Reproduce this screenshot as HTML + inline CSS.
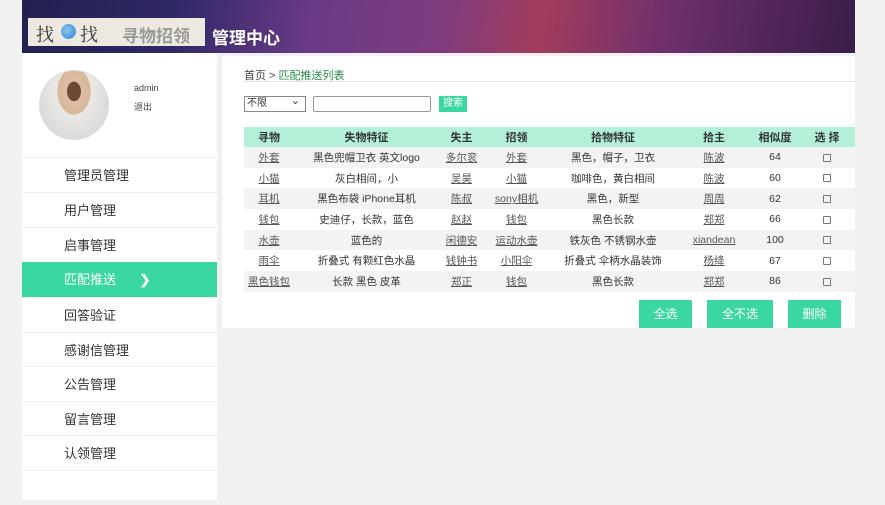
<!DOCTYPE html>
<html><head><meta charset="utf-8"><style>
*{margin:0;padding:0;box-sizing:border-box}
body{width:885px;height:500px;background:#f1f1f1;font-family:"Liberation Sans","Noto Sans CJK SC",sans-serif;position:relative;overflow:hidden;font-size:11px;color:#333}
.hd{position:absolute;left:22px;top:0;width:833px;height:53px;background:linear-gradient(100deg,#22214f 0%,#2f2866 18%,#6a3a86 35%,#7e3c7e 50%,#a33c5c 62%,#6b2f6c 78%,#3a1d48 100%)}
.logo{position:absolute;left:6px;top:18px;width:177px;height:28px;background:#eee9e0;overflow:hidden}
.logo .a1,.logo .a2{position:absolute;top:3px;font-size:18px;color:#333;font-family:"Noto Serif CJK SC",serif}
.logo .a1{left:8px}.logo .a2{left:52px}
.logo .dot{position:absolute;left:33px;top:6px;width:15px;height:15px;border-radius:50%;background:radial-gradient(circle at 40% 40%,#8cc8f0,#2a7fd0);}
.logo .b{position:absolute;left:94px;top:4px;font-size:17px;color:#999;font-weight:bold}
.hd .t{position:absolute;left:190px;top:24px;color:#fff;font-size:17px;font-weight:bold}
.sb{position:absolute;left:22px;top:53px;width:195px;height:447px;background:#fff}
.av{position:absolute;left:17px;top:17px;width:70px;height:70px;border-radius:50%;background:radial-gradient(ellipse at 50% 30%,#6a4a34 0,#6a4a34 14%,#dcbca4 15%,#d8b89a 34%,#eae8e6 35%,#dedcda 70%);border:1px solid #ddd}
.sb .u{position:absolute;left:112px;top:30px;font-size:9px;color:#444}
.sb .o{position:absolute;left:112px;top:47px;font-size:9px;color:#444}
.mi{position:absolute;left:0;width:195px;height:35px;border-top:1px solid #eee;padding-left:42px;line-height:35px;font-size:13px;color:#333}
.mi.on{background:#3ad8a0;color:#fff;border:none}
.mn{position:absolute;left:222px;top:56px;width:633px;height:272px;background:#fff}
.bc{position:absolute;left:22px;top:11px;font-size:11px;color:#444}
.bc span{color:#2a8a4a}
.ln{position:absolute;left:22px;top:25px;width:611px;height:1px;background:#e4e4e4}
.sel{position:absolute;left:22px;top:40px;width:62px;height:16px;border:1px solid #888;font-size:10px;padding-left:2px;line-height:14px}
.sel:after{content:"⌄";position:absolute;right:5px;top:-3px;font-size:11px}
.inp{position:absolute;left:91px;top:40px;width:118px;height:16px;border:1px solid #999;border-radius:2px}
.sbt{position:absolute;left:217px;top:40px;width:28px;height:16px;background:#3ad8a0;color:#fff;font-size:10px;text-align:center;line-height:16px}
table{position:absolute;left:22px;top:71px;width:611px;border-collapse:collapse}
th{background:#b2f0d8;height:20px;font-size:11px;font-weight:bold;color:#333}
td{height:20.7px;text-align:center;font-size:10.5px;color:#333}
td u{color:#555}
tr.g td{background:#f3f3f3}
.cb{display:inline-block;width:8px;height:8px;border:1px solid #777;border-radius:1px;vertical-align:middle}
.btn{position:absolute;top:244px;height:28px;background:#3ad8a0;color:#fff;font-size:12px;text-align:center;line-height:28px}
</style></head><body>
<div class="hd"><div class="logo"><span class="a1">找</span><div class="dot"></div><span class="a2">找</span><span class="b">寻物招领</span></div><div class="t">管理中心</div></div>
<div class="sb">
<div class="av"></div><div class="u">admin</div><div class="o">退出</div>
<div class="mi" style="top:104px">管理员管理</div>
<div class="mi" style="top:139px">用户管理</div>
<div class="mi" style="top:174px">启事管理</div>
<div class="mi on" style="top:209px">匹配推送 <span style="margin-left:20px;font-weight:bold">❯</span></div>
<div class="mi" style="top:244px">回答验证</div>
<div class="mi" style="top:279px">感谢信管理</div>
<div class="mi" style="top:313px">公告管理</div>
<div class="mi" style="top:348px">留言管理</div>
<div class="mi" style="top:382px">认领管理</div>
<div class="mi" style="top:417px"></div>
</div>
<div class="mn">
<div class="bc">首页 &gt; <span>匹配推送列表</span></div><div class="ln"></div>
<div class="sel">不限</div><div class="inp"></div><div class="sbt">搜索</div>
<table>
<tr><th style="width:50px">寻物</th><th style="width:145px">失物特征</th><th style="width:45px">失主</th><th style="width:65px">招领</th><th style="width:128px">拾物特征</th><th style="width:74px">拾主</th><th style="width:48px">相似度</th><th>选 择</th></tr>
<tr class="g"><td><u>外套</u></td><td>黑色兜帽卫衣 英文logo</td><td><u>多尔衮</u></td><td><u>外套</u></td><td>黑色，帽子，卫衣</td><td><u>陈波</u></td><td>64</td><td><span class="cb"></span></td></tr>
<tr><td><u>小猫</u></td><td>灰白相间，小</td><td><u>吴昊</u></td><td><u>小猫</u></td><td>咖啡色，黄白相间</td><td><u>陈波</u></td><td>60</td><td><span class="cb"></span></td></tr>
<tr class="g"><td><u>耳机</u></td><td>黑色布袋 iPhone耳机</td><td><u>陈叔</u></td><td><u>sony相机</u></td><td>黑色，新型</td><td><u>周周</u></td><td>62</td><td><span class="cb"></span></td></tr>
<tr><td><u>钱包</u></td><td>史迪仔，长款，蓝色</td><td><u>赵赵</u></td><td><u>钱包</u></td><td>黑色长款</td><td><u>郑郑</u></td><td>66</td><td><span class="cb"></span></td></tr>
<tr class="g"><td><u>水壶</u></td><td>蓝色的</td><td><u>闲德安</u></td><td><u>运动水壶</u></td><td>铁灰色 不锈钢水壶</td><td><u>xiandean</u></td><td>100</td><td><span class="cb"></span></td></tr>
<tr><td><u>雨伞</u></td><td>折叠式 有颗红色水晶</td><td><u>钱钟书</u></td><td><u>小阳伞</u></td><td>折叠式 伞柄水晶装饰</td><td><u>杨绛</u></td><td>67</td><td><span class="cb"></span></td></tr>
<tr class="g"><td><u>黑色钱包</u></td><td>长款 黑色 皮革</td><td><u>郑正</u></td><td><u>钱包</u></td><td>黑色长款</td><td><u>郑郑</u></td><td>86</td><td><span class="cb"></span></td></tr>
</table>
<div class="btn" style="left:417px;width:53px">全选</div>
<div class="btn" style="left:485px;width:66px">全不选</div>
<div class="btn" style="left:566px;width:53px">删除</div>
</div>
</body></html>
